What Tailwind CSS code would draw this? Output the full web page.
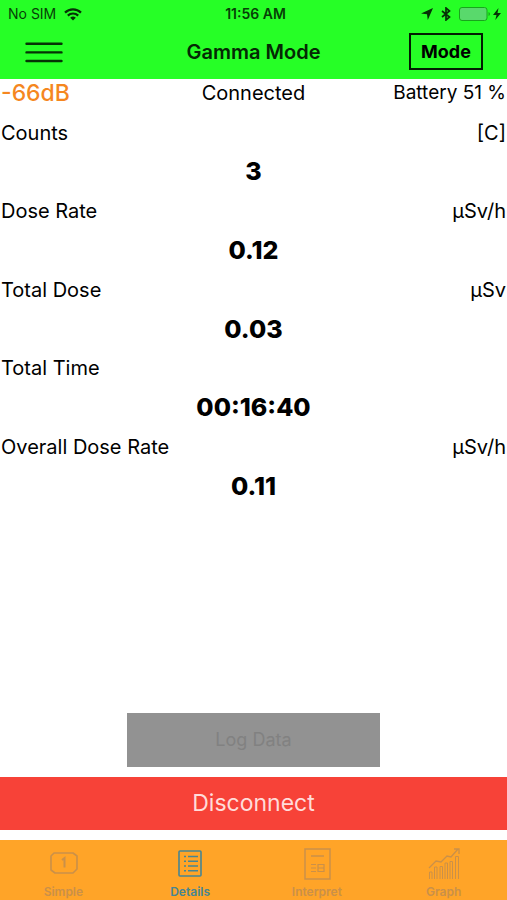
<!DOCTYPE html>
<html lang="en">
<head>
    <meta charset="UTF-8">
    <meta name="viewport" content="width=device-width, initial-scale=1.0">
    <title>Gamma Mode</title>
    <script src="https://cdn.jsdelivr.net/npm/@tailwindcss/browser@4"></script>
</head>
<body class="min-h-screen flex flex-col bg-white text-black font-['Inter',sans-serif]">
    <header class="bg-[#26ff26]">
        <!-- Status bar -->
        <div class="grid grid-cols-3 items-center h-7 pl-2 pr-1 text-sm text-[#063f06]">
            <div class="flex items-center gap-2">
                <span>No SIM</span>
                <svg class="w-[18px] h-[13px]" viewBox="0 0 18 13" fill="none" stroke="#063006" stroke-width="2.2">
                    <path d="M1 4.6a11.5 11.5 0 0 1 16 0"/>
                    <path d="M3.8 7.6a7.5 7.5 0 0 1 10.4 0"/>
                    <path d="M9 12.6 6.2 9.8a4 4 0 0 1 5.6 0z" fill="#063006" stroke="none"/>
                </svg>
            </div>
            <span class="text-center font-semibold whitespace-nowrap">11:56 AM</span>
            <div class="flex items-center justify-end gap-1">
                <svg class="w-3 h-3 mr-1" viewBox="0 0 12 12" fill="#063006"><path d="M12 0 6.8 12 6 6.2 0 5.4z"/></svg>
                <svg class="w-[10px] h-[14px]" viewBox="0 0 10 14" fill="none" stroke="#063006" stroke-width="1.7"><path d="M1 4l7.5 6L5 13V1l3.5 3L1 10"/></svg>
                <svg class="w-8 h-[14px] ml-1" viewBox="0 0 32 14">
                    <rect x=".5" y=".5" width="27.5" height="13" rx="2.5" fill="#59d96c" stroke="#18a51c"/>
                    <path d="M29.5 5v4q1.5-.5 1.5-2t-1.5-2z" fill="#18a51c"/>
                </svg>
                <svg class="w-2 h-3 -ml-0.5 mr-0.5" viewBox="0 0 8 12" fill="#063006"><path d="M5.5 0 0 7h3.5L2.3 12 8 5H4.5z"/></svg>
            </div>
        </div>
        <!-- Navigation -->
        <div class="grid grid-cols-3 items-center h-[51px] pb-1 px-6">
            <button type="button" aria-label="Menu" class="justify-self-start">
                <svg class="w-10 h-6" viewBox="0 0 40 24" stroke="#053305" stroke-width="2.4" stroke-linecap="round"><path d="M2.5 3.7h35M2.5 12.4h35M2.5 21h35"/></svg>
            </button>
            <h1 class="text-center text-xl font-semibold whitespace-nowrap text-[#042804]">Gamma Mode</h1>
            <button type="button" class="justify-self-end w-[74px] h-[37px] border-2 border-[#021c02] text-lg font-bold">Mode</button>
        </div>
    </header>

    <main class="flex-1 flex flex-col">
        <div class="grid grid-cols-3 items-center h-[34px] pb-[6px] px-px leading-7 whitespace-nowrap">
            <span class="text-[23px] leading-7 font-medium text-[#f5871f]">-66dB</span>
            <span class="text-center text-xl leading-7">Connected</span>
            <span class="text-right text-[19px] leading-7">Battery 51 %</span>
        </div>

        <!-- Readings: label and value rows share the height evenly -->
        <dl class="grid auto-rows-fr h-[393px] text-xl">
            <div class="grid grid-rows-2 items-center">
                <dt class="flex justify-between px-px"><span>Counts</span><span>[C]</span></dt>
                <dd class="text-center text-[25px] font-extrabold">3</dd>
            </div>
            <div class="grid grid-rows-2 items-center">
                <dt class="flex justify-between px-px"><span>Dose Rate</span><span>µSv/h</span></dt>
                <dd class="text-center text-[25px] font-extrabold">0.12</dd>
            </div>
            <div class="grid grid-rows-2 items-center">
                <dt class="flex justify-between px-px"><span>Total Dose</span><span>µSv</span></dt>
                <dd class="text-center text-[25px] font-extrabold">0.03</dd>
            </div>
            <div class="grid grid-rows-2 items-center">
                <dt class="flex justify-between px-px"><span>Total Time</span></dt>
                <dd class="text-center text-[25px] font-extrabold">00:16:40</dd>
            </div>
            <div class="grid grid-rows-2 items-center">
                <dt class="flex justify-between px-px"><span>Overall Dose Rate</span><span>µSv/h</span></dt>
                <dd class="text-center text-[25px] font-extrabold">0.11</dd>
            </div>
        </dl>

        <div class="mt-auto flex flex-col items-center gap-[10px] pb-[10px]">
            <button type="button" class="w-1/2 h-[54px] bg-[#929292] text-lg text-[#818181]" disabled>Log Data</button>
            <button type="button" class="w-full h-[53px] bg-[#f74238] text-[23px] text-[#ffdcda]">Disconnect</button>
        </div>
    </main>

    <!-- Tab bar -->
    <nav class="grid grid-cols-4 h-[60px] bg-[#ffa428] text-xs font-semibold text-[#ca9049]">
        <a href="#simple" class="flex flex-col items-center justify-between pt-2">
            <svg class="w-8 h-8" viewBox="0 0 32 32" fill="none" stroke="currentColor" stroke-width="1.6">
                <path d="M7 5h19l4 3v13l-4 4H8l-4-3V8z" stroke-linejoin="round"/>
                <path d="M15 12l2.500-2v9.500" stroke-width="2"/>
            </svg>
            <span>Simple</span>
        </a>
        <a href="#details" aria-current="page" class="flex flex-col items-center justify-between pt-2 text-[#478593]">
            <svg class="w-8 h-8" viewBox="0 0 32 32" fill="none" stroke="currentColor" stroke-width="1.6">
                <rect x="5" y="3" width="22" height="25" rx="1"/>
                <path d="M10 8.500h2m2 0h10M10 13.200h2m2 0h10M10 18h2m2 0h10M10 22.700h2m2 0h10"/>
            </svg>
            <span>Details</span>
        </a>
        <a href="#interpret" class="flex flex-col items-center justify-between pt-2">
            <svg class="w-8 h-8" viewBox="0 0 32 32" fill="none" stroke="currentColor" stroke-width="1.5">
                <path d="M4 1h25v30H4z"/>
                <path d="M10 8h13"/>
                <path d="M10 16.500h5M10 20h5M10 23.500h5M17 16.500h6v7h-6zM17 20h6" stroke-width="1.2"/>
            </svg>
            <span>Interpret</span>
        </a>
        <a href="#graph" class="flex flex-col items-center justify-between pt-2">
            <svg class="w-8 h-8" viewBox="0 0 32 32" fill="none" stroke="currentColor" stroke-width="1.3">
                <path d="M1 20l7-7 5 1 6-6 4 1 7-8M26 1h5v5"/>
                <path d="M1.500 31v-7h2.500v7M6.500 31V19H9v12M12 31V18.500h2.500V31M17 31V15h2.500v16M22 31V13.500h2.500V31M27.500 31V8.500H30.500V31" stroke-width="1"/>
            </svg>
            <span>Graph</span>
        </a>
    </nav>
</body>
</html>
